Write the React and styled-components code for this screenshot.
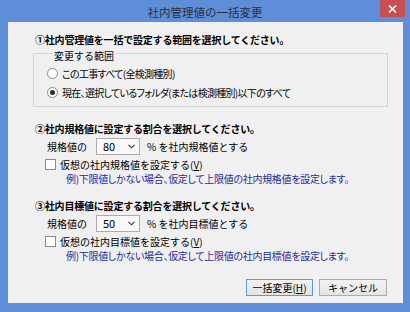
import React from "react";
import styled, { createGlobalStyle } from "styled-components";

const GlobalStyle = createGlobalStyle`
  html, body { margin: 0; padding: 0; }
  body { font-family: "Noto Sans CJK JP", "Noto Sans", sans-serif; }
  * { box-sizing: border-box; }
`;

const Window = styled.div`
  width: 410px;
  height: 312px;
  background: #5f8ed9;
  display: flex;
  flex-direction: column;
  overflow: hidden;
`;

const TitleBar = styled.div`
  height: 22px;
  display: grid;
  grid-template-columns: 1fr auto 1fr;
  align-items: start;
`;

const TitleText = styled.div`
  grid-column: 2;
  font-size: 11.5px;
  line-height: 14px;
  margin-top: 5px;
  color: #2a2f3a;
  white-space: nowrap;
`;

const CloseButton = styled.div`
  grid-column: 3;
  justify-self: end;
  width: 25px;
  height: 17px;
  margin-right: 5px;
  background: #c75050;
  display: flex;
  align-items: center;
  justify-content: center;
`;

const Client = styled.div`
  flex: 1;
  margin: 0 7px 9px 8px;
  background: #f0f0f0;
  display: flex;
  flex-direction: column;
  font-size: 10px;
  color: #000;
`;

const SectionTitle = styled.div`
  height: 14px;
  line-height: 14px;
  margin-top: ${(p) => p.$top}px;
  padding-left: 27px;
  font-weight: bold;
  letter-spacing: -0.2px;
  white-space: nowrap;
`;

const GroupBox = styled.fieldset`
  margin: -3px 15px 0 25px;
  padding: 2px 0 4px 13px;
  border: 1px solid #d5d5d5;
  min-width: 0;
`;

const Legend = styled.legend`
  margin-left: 5px;
  padding: 5px 2px 0 2px;
  line-height: 13px;
  white-space: nowrap;
`;

const OptionRow = styled.label`
  height: 19px;
  display: flex;
  align-items: center;
  gap: 4px;
  white-space: nowrap;
  font-feature-settings: "palt";
  letter-spacing: -0.7px;
`;

const RadioCircle = styled.span`
  width: 11px;
  height: 11px;
  border-radius: 50%;
  border: 1px solid #8a8a8a;
  background: #fff;
  display: flex;
  align-items: center;
  justify-content: center;
  flex: none;
  &::after {
    content: "";
    width: 5px;
    height: 5px;
    border-radius: 50%;
    background: ${(p) => (p.$checked ? "#2b2b2b" : "transparent")};
  }
`;

const FieldRow = styled.div`
  height: 18px;
  margin-top: ${(p) => p.$top}px;
  padding-left: 39px;
  display: flex;
  align-items: center;
  white-space: nowrap;
`;

const Combo = styled.div`
  width: 44px;
  height: 17px;
  margin: 0 7px 0 9px;
  border: 1px solid #acacac;
  background: #f9f9f9;
  display: flex;
  align-items: center;
  justify-content: space-between;
  padding: 0 4px 0 6px;
  font-size: 11px;
`;

const CheckRow = styled.label`
  height: 16px;
  margin-top: 1px;
  padding-left: 37px;
  display: flex;
  align-items: center;
  gap: 4px;
  white-space: nowrap;
`;

const CheckBox = styled.span`
  width: 11px;
  height: 11px;
  border: 1px solid #8a8a8a;
  background: #fff;
  flex: none;
`;

const Accel = styled.span`
  text-decoration: underline;
`;

const Note = styled.div`
  height: 14px;
  line-height: 14px;
  margin-top: ${(p) => p.$top}px;
  padding-left: 58px;
  color: #1f2a9e;
  white-space: nowrap;
  font-feature-settings: "palt";
  letter-spacing: -0.3px;
`;

const ButtonBar = styled.div`
  margin-top: 16px;
  padding-right: 16px;
  display: flex;
  justify-content: flex-end;
  gap: 6px;
`;

const Button = styled.div`
  width: ${(p) => p.$w}px;
  height: 17px;
  border: 1px solid ${(p) => (p.$default ? "#5a9be0" : "#acacac")};
  background: linear-gradient(#f2f2f2, #e4e4e4);
  display: flex;
  align-items: center;
  justify-content: center;
  font-size: 10px;
  white-space: nowrap;
`;

const Chevron = () => (
  <svg width="7" height="5" viewBox="0 0 7 5">
    <path d="M0.5 0.8 L3.5 3.8 L6.5 0.8" fill="none" stroke="#333" strokeWidth="1.1" />
  </svg>
);

const Section = ({ num, title, top, value, suffix, check, note }) => (
  <>
    <SectionTitle $top={top}>{num}{title}</SectionTitle>
    <FieldRow $top={1}>
      規格値の
      <Combo>
        <span>{value}</span>
        <Chevron />
      </Combo>
      {suffix}
    </FieldRow>
    <CheckRow>
      <CheckBox />
      <span>
        {check}(<Accel>V</Accel>)
      </span>
    </CheckRow>
    <Note $top={0}>{note}</Note>
  </>
);

export default function App() {
  return (
    <>
      <GlobalStyle />
      <Window>
        <TitleBar>
          <TitleText>社内管理値の一括変更</TitleText>
          <CloseButton>
            <svg width="9" height="8" viewBox="0 0 9 8">
              <path d="M1 0.5 L8 7.5 M8 0.5 L1 7.5" stroke="#fff" strokeWidth="1.6" />
            </svg>
          </CloseButton>
        </TitleBar>
        <Client>
          <SectionTitle $top={11}>①社内管理値を一括で設定する範囲を選択してください。</SectionTitle>
          <GroupBox>
            <Legend>変更する範囲</Legend>
            <OptionRow>
              <RadioCircle />
              この工事すべて(全検測種別)
            </OptionRow>
            <OptionRow>
              <RadioCircle $checked />
              現在、選択しているフォルダ(または検測種別)以下のすべて
            </OptionRow>
          </GroupBox>
          <Section
            num="②"
            title="社内規格値に設定する割合を選択してください。"
            top={15}
            value="80"
            suffix="% を社内規格値とする"
            check="仮想の社内規格値を設定する"
            note="例)下限値しかない場合、仮定して上限値の社内規格値を設定します。"
          />
          <Section
            num="③"
            title="社内目標値に設定する割合を選択してください。"
            top={13}
            value="50"
            suffix="% を社内目標値とする"
            check="仮想の社内目標値を設定する"
            note="例)下限値しかない場合、仮定して上限値の社内目標値を設定します。"
          />
          <ButtonBar>
            <Button $w={67} $default>
              一括変更(<Accel>H</Accel>)
            </Button>
            <Button $w={68}>キャンセル</Button>
          </ButtonBar>
        </Client>
      </Window>
    </>
  );
}
